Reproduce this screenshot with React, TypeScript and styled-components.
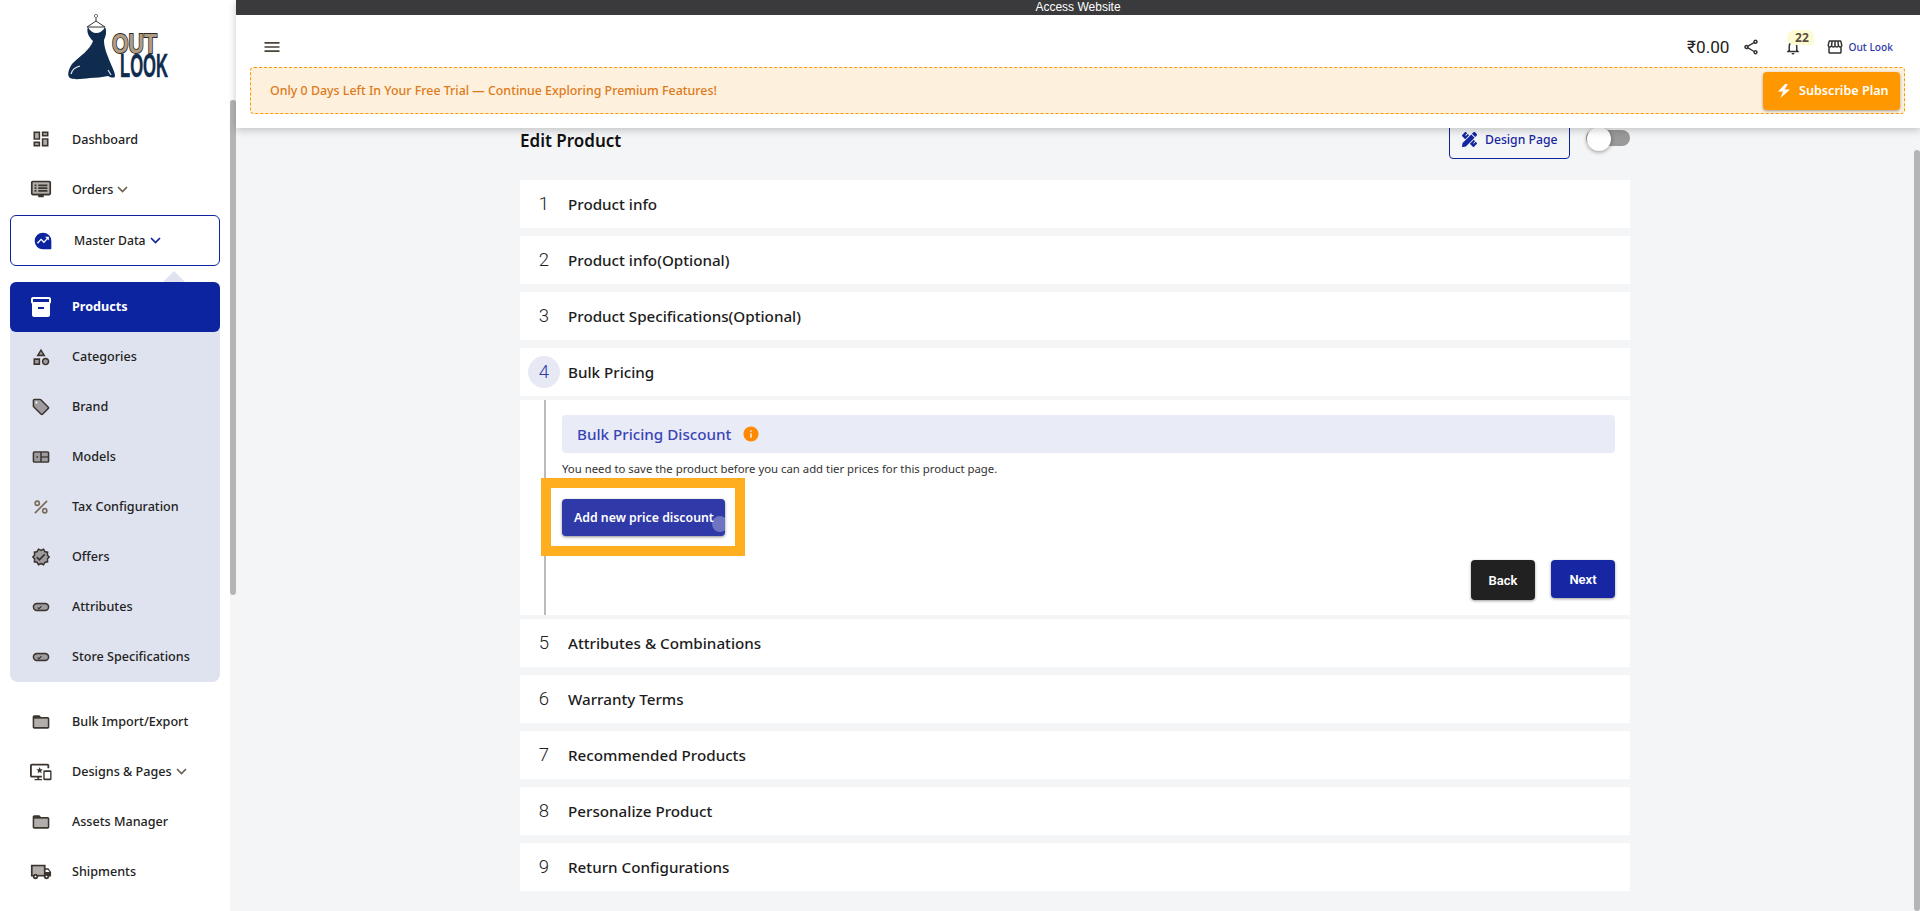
import * as React from "react";
import styled, { createGlobalStyle } from "styled-components";
import { FaPencilRuler } from "react-icons/fa";
import { MdInfo, MdMenu, MdOutlineNotifications, MdOutlineShare, MdOutlineStorefront } from "react-icons/md";

const GlobalStyle = createGlobalStyle`
    html, body { margin: 0; padding: 0; height: 100%; overflow: hidden; background: #f4f5f7; }
    body { font-family: "Noto Sans", "Liberation Sans", sans-serif; color: #1c1c1c; }
    * { box-sizing: border-box; }
`;

const UI_FONT = `"Noto Sans", "Liberation Sans", sans-serif`;
const ICON_INK = "#3b352e";
const BRAND = "#0d24a0";

/* ---- drawn icons (two tone, same shape as the material set) ---- */

const Glyph: React.FC<{ size?: number; color?: string; children: React.ReactNode }> = ({ size = 20, color = ICON_INK, children }) => (
    <svg width={size} height={size} viewBox="0 0 24 24" fill={color}>{children}</svg>
);

const DashboardIcon = () => <Glyph><path opacity=".4" d="M5 5h4v6H5zm10 8h4v6h-4zM5 17h4v2H5zM15 5h4v2h-4z" /><path d="M3 13h8V3H3v10zm2-8h4v6H5V5zm8 16h8V11h-8v10zm2-8h4v6h-4v-6zM13 3v6h8V3h-8zm6 4h-4V5h4v2zM3 21h8v-6H3v6zm2-4h4v2H5v-2z" /></Glyph>;
const OrdersIcon = () => <Glyph size={22}><path opacity=".4" d="M3 5h18v12H3z" /><path d="M3 3h18a2 2 0 0 1 2 2v12a2 2 0 0 1-2 2h-6v2H9v-2H3a2 2 0 0 1-2-2V5a2 2 0 0 1 2-2zm0 2v12h18V5H3zm2 2h2v2H5V7zm4 0h10v2H9V7zm-4 3h2v2H5v-2zm4 0h10v2H9v-2zm-4 3h2v2H5v-2zm4 0h10v2H9v-2z" /></Glyph>;
const MasterIcon = () => <Glyph color={BRAND}><path d="M12 2a10 10 0 1 0 0 20h9a1 1 0 0 0 1-1v-9A10 10 0 0 0 12 2zm-6 13.4-1.3-1.4 5-5 3.4 3.3 3.3-3.4-1.9-1.9H19v4.500l-1.500-1.500-4.400 4.600-3.400-3.400L6 15.400z" /></Glyph>;
const BoxIcon = () => <Glyph size={24} color="#fff"><path d="M20 2H4c-1 0-2 .9-2 2v3.010c0 .72.43 1.340 1 1.690V20c0 1.100 1.100 2 2 2h14c.9 0 2-.9 2-2V8.700c.57-.35 1-.97 1-1.690V4c0-1.100-1-2-2-2zm-5 12H9v-2h6v2zm5-7H4V4l16-.02V7z" /></Glyph>;
const CategoryIcon = () => <Glyph><path opacity=".4" d="M12 5.840 10.060 9h3.870zM17.500 15a2.500 2.500 0 1 0 0 5 2.500 2.500 0 0 0 0-5zM5 15.500h4v4H5z" /><path d="M12 2l-5.500 9h11L12 2zm0 3.840L13.930 9h-3.870L12 5.840zM17.500 13c-2.490 0-4.500 2.010-4.500 4.500s2.010 4.500 4.500 4.500 4.500-2.010 4.500-4.500-2.010-4.500-4.500-4.500zm0 7c-1.380 0-2.500-1.120-2.500-2.500s1.120-2.500 2.500-2.500 2.500 1.120 2.500 2.500-1.120 2.500-2.500 2.500zM3 21.500h8v-8H3v8zm2-6h4v4H5v-4z" /></Glyph>;
const TagIcon = () => <Glyph><path opacity=".4" d="M11 4H4v7l9 9.010L20 13l-9-9zM6.500 8C5.670 8 5 7.330 5 6.500S5.670 5 6.500 5 8 5.670 8 6.500 7.330 8 6.500 8z" /><path d="M21.410 11.580l-9-9C12.050 2.220 11.550 2 11 2H4c-1.100 0-2 .9-2 2v7c0 .55.22 1.050.59 1.420l9 9c.36.36.86.58 1.410.58s1.050-.22 1.410-.59l7-7c.37-.36.59-.86.59-1.410s-.23-1.060-.59-1.420zM13 20.010L4 11V4h7v-.01l9 9-7 7.020z" /></Glyph>;
const ModelsIcon = () => <Glyph><path opacity=".4" d="M4 7h7v10H4zM13 7h7v4h-7zM13 13h7v4h-7z" /><path d="M4 5h16a2 2 0 0 1 2 2v10a2 2 0 0 1-2 2H4a2 2 0 0 1-2-2V7a2 2 0 0 1 2-2zm0 2v10h7V7H4zm9 0v4h7V7h-7zm0 6v4h7v-4h-7zM6.500 11h2v2h-2z" /></Glyph>;
const PercentIcon = () => <Glyph color="#7a6a58"><path d="M7.500 4a3.500 3.500 0 1 1 0 7 3.500 3.500 0 0 1 0-7zm0 2a1.500 1.500 0 1 0 0 3 1.500 1.500 0 0 0 0-3zm9 7a3.500 3.500 0 1 1 0 7 3.500 3.500 0 0 1 0-7zm0 2a1.500 1.500 0 1 0 0 3 1.500 1.500 0 0 0 0-3zM18.600 4 20 5.400 5.400 20 4 18.600z" /></Glyph>;
const OfferIcon = () => <Glyph><path opacity=".4" d="M18.680 13.900l.25 2.800-2.740.62-1.430 2.410L12 18.630l-2.580 1.110-1.430-2.420-2.740-.62.25-2.790L3.620 12l1.880-2.150-.25-2.780 2.740-.61 1.430-2.420L12 5.150l2.580-1.110 1.430 2.410 2.740.62-.25 2.790L20.380 12z" /><path d="M23 12l-2.440-2.790.34-3.690-3.610-.82-1.890-3.200L12 2.960 8.600 1.500 6.710 4.690 3.100 5.500l.34 3.700L1 12l2.440 2.790-.34 3.700 3.610.82L8.600 22.500l3.400-1.470 3.400 1.460 1.890-3.190 3.610-.82-.34-3.690L23 12zm-4.320 1.900.25 2.800-2.740.62-1.430 2.410L12 18.630l-2.580 1.110-1.430-2.420-2.740-.62.25-2.790L3.620 12l1.880-2.150-.25-2.780 2.740-.61 1.430-2.420L12 5.150l2.580-1.110 1.430 2.410 2.740.62-.25 2.790L20.380 12zM10.090 16.720l7.070-7.070-1.410-1.420-5.660 5.660-2.410-2.400-1.410 1.410z" /></Glyph>;
const PillIcon = () => <Glyph><path opacity=".4" d="M7 9h10a3 3 0 0 1 0 6H7a3 3 0 0 1 0-6z" /><path d="M7 7h10a5 5 0 0 1 0 10H7A5 5 0 0 1 7 7zm0 2a3 3 0 0 0 0 6h10a3 3 0 0 0 0-6H7zm.5 4.100 1-1 1 1 2.500-2.500 1 1-3.500 3.500z" /></Glyph>;
const FolderIcon = () => <Glyph><path opacity=".4" d="M4 8h16v10H4z" /><path d="M20 6h-8l-2-2H4c-1.100 0-1.990.9-1.990 2L2 18c0 1.100.9 2 2 2h16c1.100 0 2-.9 2-2V8c0-1.100-.9-2-2-2zm0 12H4V8h16v10z" /></Glyph>;
const DevicesIcon = () => <Glyph size={22}><path d="M2 3h17a2 2 0 0 1 2 2v3h-2V5H2v11h11v2h-3v1.500h3V21H5v-1.500h3V18H2a2 2 0 0 1-2-2V5a2 2 0 0 1 2-2zm8.500 3.500 1 2.400 2.500.2-1.900 1.700.6 2.500-2.200-1.300-2.200 1.300.6-2.500L7 9.100l2.500-.2z" /><path d="M16 10h6a1.500 1.500 0 0 1 1.500 1.500v8A1.500 1.500 0 0 1 22 21h-6a1.500 1.500 0 0 1-1.500-1.500v-8A1.500 1.500 0 0 1 16 10zm0 2v7h6v-7h-6z" /></Glyph>;
const TruckIcon = () => <Glyph size={22}><path opacity=".4" d="M3 6h12v9H8.220c-.55-.61-1.330-1-2.220-1s-1.670.39-2.220 1H3z" /><path d="M20 8h-3V4H1v13h2c0 1.660 1.340 3 3 3s3-1.340 3-3h6c0 1.660 1.340 3 3 3s3-1.340 3-3h2v-5l-3-4zm-.5 1.500 1.960 2.500H17V9.500h2.500zM6 18c-.55 0-1-.45-1-1s.45-1 1-1 1 .45 1 1-.45 1-1 1zm2.220-3c-.55-.61-1.330-1-2.220-1s-1.670.39-2.220 1H3V6h12v9H8.220zM18 18c-.55 0-1-.45-1-1s.45-1 1-1 1 .45 1 1-.45 1-1 1z" /></Glyph>;
const BoltIcon = () => <svg width="13" height="14" viewBox="0 0 13 14" fill="#fff"><path d="M8 0 1 7.500h5L3.500 14 13 5.500H7.500L11 0z" /></svg>;

const Chevron: React.FC<{ color: string }> = ({ color }) => (
    <svg width="11" height="7" viewBox="0 0 11 7" fill="none" stroke={color} strokeWidth="1.700"><path d="M1 1l4.500 4.500L10 1" /></svg>
);

const Logo = () => (
    <svg width="120" height="75" viewBox="0 0 120 75">
        <circle cx="36" cy="6" r="1.600" fill="none" stroke="#555" strokeWidth=".8" />
        <path d="M36 8v3M27 17l9-6 9 6z" fill="none" stroke="#333" strokeWidth="1" />
        <path d="M28 17c2 4 5 6 8 6 4 0 7-2 9-6 2 4 1 9-1 13 0 8 3 14 6 22 2 5 5 10 5 14 0 2-3 2-7 0-6 1-12 2-18 2-8 1-16 2-20 0-3-2-2-8 2-14 8-8 18-14 21-23-4-4-7-9-5-14z" fill="#0f2c4f" />
        <path d="M11 64c1-4 5-7 9-8M48 60l3 5" fill="none" stroke="#dfe6ee" strokeWidth="1.200" />
        <text x="60" y="67" fontFamily="Liberation Sans" fontWeight="700" fontSize="34" fill="#0f2c4f" stroke="#0f2c4f" strokeWidth=".5" textLength="48" lengthAdjust="spacingAndGlyphs">LOOK</text>
        <text x="52" y="43" fontFamily="Liberation Sans" fontWeight="700" fontSize="27" fill="#b09c84" stroke="#2d2a28" strokeWidth="1.800" paintOrder="stroke" textLength="45" lengthAdjust="spacingAndGlyphs">OUT</text>
    </svg>
);

/* ---- sidebar ---- */

const Sidebar = styled.aside`
    position: relative;
    flex: 0 0 236px;
    height: 911px;
    padding-right: 6px;
    background: linear-gradient(#fff 0, #fff 100px, #f5f5f5 100px);
`;
const SideInner = styled.div`
    height: 100%;
    background: #fff;
`;
const SideThumb = styled.div`
    position: absolute;
    top: 100px;
    right: 0;
    width: 6px;
    height: 495px;
    border-radius: 3px;
    background: #b5b5b5;
`;
const LogoBox = styled.div`
    height: 114px;
    padding: 10px 0 0 60px;
`;
const Nav = styled.nav`
    display: flex;
    flex-direction: column;
    padding: 0 10px;
`;
const NavRow = styled.div<{ $active?: boolean; $flush?: boolean }>`
    display: flex;
    align-items: center;
    height: 50px;
    padding: 0 0 ${p => (p.$flush ? 0 : 1)}px 19px;
    gap: 19px;
    border-radius: 6px;
    font-size: 12.600px;
    font-weight: ${p => (p.$active ? 700 : 500)};
    color: ${p => (p.$active ? "#fff" : "#222")};
    background: ${p => (p.$active ? BRAND : "transparent")};
`;
const NavIcon = styled.span`
    display: flex;
    align-items: center;
    justify-content: center;
    flex: 0 0 24px;
`;
const NavLabel = styled.span`
    display: flex;
    align-items: center;
    gap: 4px;
`;
const MasterRow = styled(NavRow)`
    position: relative;
    height: 51px;
    margin-top: 1px;
    padding-left: 20px;
    border: 1px solid ${BRAND};
    font-size: 12.200px;
    &::after {
        content: "";
        position: absolute;
        right: 34px;
        bottom: -17px;
        border: 11px solid transparent;
        border-top: 0;
        border-bottom-color: #dfe2ef;
    }
`;
const SubGroup = styled.div`
    margin: 16px 0 15px;
    border-radius: 8px;
    background: #dfe2ef;
`;

const NavItem: React.FC<{ icon: React.ReactNode; label: string; caret?: string; active?: boolean; flush?: boolean }> = ({ icon, label, caret, active, flush }) => (
    <NavRow $active={active} $flush={flush}>
        <NavIcon>{icon}</NavIcon>
        <NavLabel>{label}{caret && <Chevron color={caret} />}</NavLabel>
    </NavRow>
);

/* ---- header ---- */

const Main = styled.div`
    position: relative;
    flex: 1;
    height: 911px;
    min-width: 0;
    display: flex;
    flex-direction: column;
`;
const Header = styled.header`
    position: relative;
    z-index: 2;
    background: #fff;
    box-shadow: 0 2px 8px rgba(0, 0, 0, .22);
`;
const AccessBar = styled.div`
    height: 15px;
    text-align: center;
    font: 12px/15px "Liberation Sans", sans-serif;
    color: #fff;
    background: #3a3a3c;
`;
const Toolbar = styled.div`
    display: flex;
    align-items: center;
    height: 52px;
    padding: 20px 27px 8px 26px;
    color: #4a4235;
`;
const Spacer = styled.div`
    flex: 1;
`;
const Price = styled.span`
    margin-right: 13px;
    font: 400 17.200px Roboto, sans-serif;
    color: #222;
`;
const BellWrap = styled.span`
    position: relative;
    display: flex;
    margin: 0 24px;
`;
const Badge = styled.span`
    position: absolute;
    left: 3px;
    top: -8px;
    width: 27px;
    height: 15px;
    padding-left: 2px;
    border-radius: 12px 12px 4px 12px;
    background: #fdfbd2;
    font: 700 12px/15px ${UI_FONT};
    text-align: center;
    color: #5b4c3c;
`;
const StoreName = styled.span`
    margin-left: 4px;
    font-size: 10.200px;
    font-weight: 500;
    color: #2f39a8;
`;
const TrialBanner = styled.div`
    display: flex;
    align-items: center;
    justify-content: space-between;
    height: 47px;
    margin: 0 15px 14px 14px;
    padding: 0 4px 0 19px;
    border: 1px dashed #ff9800;
    border-radius: 4px;
    background: #fdf0dd;
    font-size: 12.400px;
    font-weight: 500;
    color: #dd7a1a;
`;
const SubscribeButton = styled.button`
    display: flex;
    align-items: center;
    gap: 9px;
    width: 137px;
    height: 38px;
    padding: 0 0 0 14px;
    border: 0;
    border-radius: 4px;
    background: #ff9800;
    box-shadow: 0 1px 3px rgba(0, 0, 0, .35);
    font: 600 12.600px ${UI_FONT};
    color: #fff;
`;

/* ---- page ---- */

const PageArea = styled.div`
    padding-right: 6px;
`;
const Page = styled.main`
    width: 1110px;
    margin: -8px auto 0;
`;
const PageHead = styled.div`
    display: flex;
    align-items: center;
    justify-content: space-between;
    height: 39px;
    margin-bottom: 21px;
`;
const PageTitle = styled.h1`
    margin: 0;
    padding-top: 2px;
    font-size: 17px;
    font-weight: 600;
    color: #111;
`;
const HeadActions = styled.div`
    display: flex;
    align-items: flex-start;
    gap: 16px;
    height: 39px;
`;
const DesignButton = styled.button`
    display: flex;
    align-items: center;
    gap: 8px;
    width: 121px;
    height: 39px;
    padding: 0 0 0 12px;
    border: 1px solid ${BRAND};
    border-radius: 4px;
    background: transparent;
    font: 500 12.200px ${UI_FONT};
    color: #1726a3;
`;
const Toggle = styled.span`
    position: relative;
    display: block;
    width: 44px;
    height: 16px;
    margin-top: 10px;
    border-radius: 8px;
    background: #999;
    &::after {
        content: "";
        position: absolute;
        left: 1px;
        top: -3px;
        width: 24px;
        height: 24px;
        border-radius: 50%;
        background: #fff;
        box-shadow: 0 1px 4px rgba(0, 0, 0, .4);
    }
`;
const StepRow = styled.div<{ $open?: boolean }>`
    display: flex;
    align-items: center;
    gap: 8px;
    height: 48px;
    padding-left: 8px;
    margin-bottom: ${p => (p.$open ? 4 : 8)}px;
    background: #fff;
    font-size: 15.200px;
    font-weight: 500;
    color: #1c1c1c;
`;
const StepNumber = styled.span<{ $open?: boolean }>`
    display: flex;
    align-items: center;
    justify-content: center;
    width: 32px;
    height: 32px;
    border-radius: 50%;
    background: ${p => (p.$open ? "#e7e9f5" : "transparent")};
    font: 300 18.500px Roboto, sans-serif;
    color: ${p => (p.$open ? "#2f39a8" : "#222")};
`;
const StepBody = styled.div`
    height: 215px;
    margin-bottom: 4px;
    padding-left: 24px;
    background: #fff;
`;
const Rail = styled.div`
    height: 100%;
    padding: 15px 15px 15px 16px;
    border-left: 2px solid #bbb;
    display: flex;
    flex-direction: column;
    align-items: flex-start;
`;
const DiscountHead = styled.div`
    display: flex;
    align-items: center;
    gap: 11px;
    width: 100%;
    height: 38px;
    padding-left: 15px;
    border-radius: 4px;
    background: #e9ebf6;
    font-size: 15.200px;
    font-weight: 500;
    color: #3a45b5;
`;
const HelpText = styled.p`
    margin: 8px 0 0;
    font-size: 11.350px;
    line-height: 15px;
    color: #333;
`;
const AddWrap = styled.div`
    position: relative;
    display: flex;
    margin-top: 23px;
`;
const AddButton = styled.button`
    position: relative;
    overflow: hidden;
    width: 163px;
    height: 37px;
    padding: 0 0 0 12px;
    border: 0;
    border-radius: 4px;
    background: #2f39a8;
    box-shadow: 0 1px 3px rgba(0, 0, 0, .45);
    text-align: left;
    font: 600 12.300px ${UI_FONT};
    color: #fff;
`;
const Ripple = styled.span`
    position: absolute;
    left: 150px;
    top: 17px;
    width: 16px;
    height: 16px;
    border-radius: 50%;
    background: rgba(255, 255, 255, .3);
`;
const Highlight = styled.span`
    position: absolute;
    inset: -21px -20px -20px -21px;
    border: 10px solid #ffae1f;
    pointer-events: none;
`;
const FormFooter = styled.div`
    display: flex;
    align-items: flex-start;
    justify-content: flex-end;
    gap: 16px;
    width: 100%;
    margin-top: 24px;
`;
const FooterButton = styled.button<{ $dark?: boolean }>`
    width: 64px;
    height: ${p => (p.$dark ? 40 : 38)}px;
    border: 0;
    border-radius: 4px;
    background: ${p => (p.$dark ? "#212121" : "#1726a3")};
    box-shadow: 0 1px 3px rgba(0, 0, 0, .4);
    font: 600 13px Roboto, sans-serif;
    color: #fff;
`;
const PageThumb = styled.div`
    position: absolute;
    top: 150px;
    right: 0;
    bottom: 0;
    width: 6px;
    border-radius: 3px;
    background: #b5b5b5;
    z-index: 1;
`;

const Shell = styled.div`
    display: flex;
    width: 1920px;
    height: 911px;
    overflow: hidden;
`;

const steps = ["Product info", "Product info(Optional)", "Product Specifications(Optional)", "Bulk Pricing", "Attributes & Combinations", "Warranty Terms", "Recommended Products", "Personalize Product", "Return Configurations"];
const OPEN_STEP = 3;

export default function App() {
    return (
        <Shell>
            <GlobalStyle />
            <Sidebar>
                <SideInner>
                    <LogoBox><Logo /></LogoBox>
                    <Nav>
                        <NavItem flush icon={<DashboardIcon />} label="Dashboard" />
                        <NavItem flush icon={<OrdersIcon />} label="Orders" caret="#6d6152" />
                        <MasterRow $flush>
                            <NavIcon><MasterIcon /></NavIcon>
                            <NavLabel>Master Data<Chevron color={BRAND} /></NavLabel>
                        </MasterRow>
                        <SubGroup>
                            <NavItem active icon={<BoxIcon />} label="Products" />
                            <NavItem icon={<CategoryIcon />} label="Categories" />
                            <NavItem icon={<TagIcon />} label="Brand" />
                            <NavItem icon={<ModelsIcon />} label="Models" />
                            <NavItem icon={<PercentIcon />} label="Tax Configuration" />
                            <NavItem icon={<OfferIcon />} label="Offers" />
                            <NavItem icon={<PillIcon />} label="Attributes" />
                            <NavItem icon={<PillIcon />} label="Store Specifications" />
                        </SubGroup>
                        <NavItem icon={<FolderIcon />} label="Bulk Import/Export" />
                        <NavItem icon={<DevicesIcon />} label="Designs & Pages" caret="#6d6152" />
                        <NavItem icon={<FolderIcon />} label="Assets Manager" />
                        <NavItem icon={<TruckIcon />} label="Shipments" />
                    </Nav>
                </SideInner>
                <SideThumb />
            </Sidebar>
            <Main>
                <Header>
                    <AccessBar>Access Website</AccessBar>
                    <Toolbar>
                        <MdMenu size={20} />
                        <Spacer />
                        <Price>₹0.00</Price>
                        <MdOutlineShare size={18} color="#333" />
                        <BellWrap>
                            <MdOutlineNotifications size={18} color="#333" />
                            <Badge>22</Badge>
                        </BellWrap>
                        <MdOutlineStorefront size={18} color="#333" />
                        <StoreName>Out Look</StoreName>
                    </Toolbar>
                    <TrialBanner>
                        Only 0 Days Left In Your Free Trial — Continue Exploring Premium Features!
                        <SubscribeButton><BoltIcon />Subscribe Plan</SubscribeButton>
                    </TrialBanner>
                </Header>
                <PageArea>
                    <Page>
                        <PageHead>
                            <PageTitle>Edit Product</PageTitle>
                            <HeadActions>
                                <DesignButton><FaPencilRuler size={15} />Design Page</DesignButton>
                                <Toggle />
                            </HeadActions>
                        </PageHead>
                        {steps.map((title, i) => (
                            <React.Fragment key={title}>
                                <StepRow $open={i === OPEN_STEP}>
                                    <StepNumber $open={i === OPEN_STEP}>{i + 1}</StepNumber>
                                    {title}
                                </StepRow>
                                {i === OPEN_STEP && (
                                    <StepBody>
                                        <Rail>
                                            <DiscountHead>Bulk Pricing Discount <MdInfo size={18} color="#ff8a00" /></DiscountHead>
                                            <HelpText>You need to save the product before you can add tier prices for this product page.</HelpText>
                                            <AddWrap>
                                                <AddButton>Add new price discount<Ripple /></AddButton>
                                                <Highlight />
                                            </AddWrap>
                                            <FormFooter>
                                                <FooterButton $dark>Back</FooterButton>
                                                <FooterButton>Next</FooterButton>
                                            </FormFooter>
                                        </Rail>
                                    </StepBody>
                                )}
                            </React.Fragment>
                        ))}
                    </Page>
                </PageArea>
                <PageThumb />
            </Main>
        </Shell>
    );
}
